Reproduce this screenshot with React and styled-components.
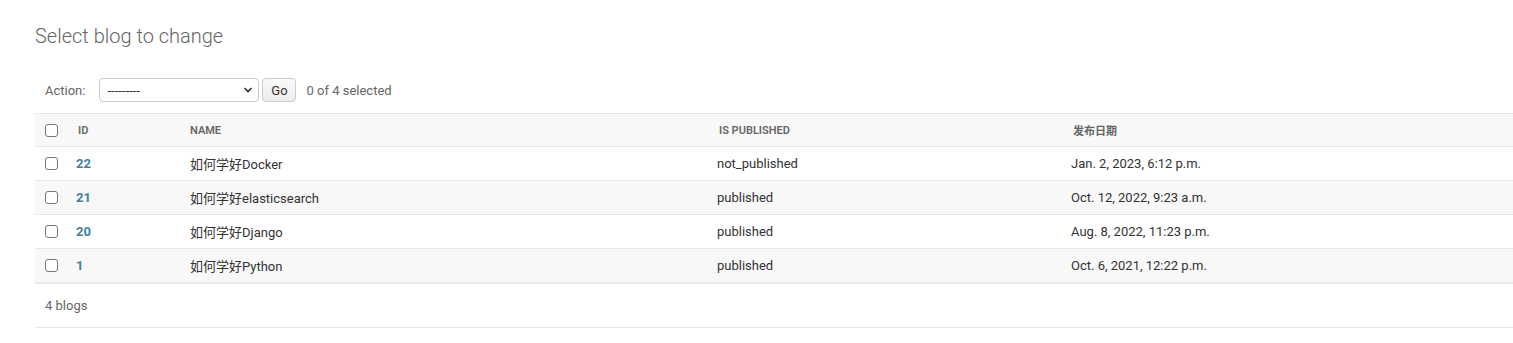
import styled, {createGlobalStyle} from "styled-components";

const GlobalStyle = createGlobalStyle`
    html, body {
        margin: 0;
        padding: 0;
        background: #ffffff;
    }
    body {
        font-family: Roboto, "Noto Sans CJK SC", "Liberation Sans", sans-serif;
        color: #333333;
        font-size: 13px;
    }
`

const Content = styled.div`
    padding: 24px 0 0 35px;
`

const Title = styled.h1`
    margin: 0 0 19px 0;
    font-size: 20px;
    line-height: 24px;
    font-weight: 300;
    color: #666666;
`

const Actions = styled.div`
    display: flex;
    align-items: center;
    height: 46px;
    padding: 0 10px;
    color: #666666;
    font-size: 13px;

    label {
        margin-right: 14px;
    }

    .counter {
        margin-left: 10px;
    }
`

const SelectWrap = styled.div`
    position: relative;
    width: 160px;
    height: 24px;

    select {
        appearance: none;
        -webkit-appearance: none;
        width: 100%;
        height: 100%;
        box-sizing: border-box;
        border: 1px solid #cccccc;
        border-radius: 4px;
        background: #ffffff;
        padding: 0 24px 0 7px;
        font-family: Roboto, "Liberation Sans", sans-serif;
        font-size: 13px;
        color: #333333;
    }

    svg {
        position: absolute;
        right: 6px;
        top: 8px;
        pointer-events: none;
    }
`

const GoButton = styled.button`
    margin-left: 3px;
    width: 34px;
    height: 24px;
    box-sizing: border-box;
    border: 1px solid #cccccc;
    border-radius: 4px;
    background: linear-gradient(#fafafa, #ececec);
    font-family: Roboto, "Liberation Sans", sans-serif;
    font-size: 13px;
    color: #333333;
    padding: 0;
`

const Table = styled.table`
    width: 100%;
    border-collapse: collapse;
    table-layout: fixed;
`

const HeadCell = styled.th`
    width: ${props => props.w || "auto"};
    height: 33px;
    padding: 0 10px;
    box-sizing: border-box;
    text-align: left;
    vertical-align: middle;
    background: #f8f8f8;
    border-top: 1px solid #e8e8e8;
    border-bottom: 1px solid #e8e8e8;
    font-size: 11px;
    font-weight: 600;
    text-transform: uppercase;
    color: #666666;
`

const Row = styled.tr`
    background: ${props => props.alt ? "#f8f8f8" : "#ffffff"};

    a {
        color: #447e9b;
        font-weight: 700;
        text-decoration: none;
    }
`

const Cell = styled.td`
    height: 33px;
    padding: 0 10px 0 ${props => props.pad || "8px"};
    vertical-align: middle;
    border-bottom: ${props => props.last ? "2px" : "1px"} solid #e8e8e8;
    white-space: nowrap;
`

const Check = styled.input`
    appearance: none;
    -webkit-appearance: none;
    display: block;
    margin: 0;
    width: 13px;
    height: 13px;
    box-sizing: border-box;
    border: 1px solid #777777;
    border-radius: 3px;
    background: #ffffff;
`

const Paginator = styled.p`
    margin: 0;
    height: 42px;
    padding: 1px 10px 0;
    line-height: 41px;
    color: #666666;
    font-size: 13px;
    border-bottom: 1px solid #e8e8e8;
`

const blogs = [
    {id: 22, name: "如何学好Docker", published: "not_published", date: "Jan. 2, 2023, 6:12 p.m."},
    {id: 21, name: "如何学好elasticsearch", published: "published", date: "Oct. 12, 2022, 9:23 a.m."},
    {id: 20, name: "如何学好Django", published: "published", date: "Aug. 8, 2022, 11:23 p.m."},
    {id: 1, name: "如何学好Python", published: "published", date: "Oct. 6, 2021, 12:22 p.m."},
];

export default function App() {
    return (
        <>
            <GlobalStyle />
            <Content>
                <Title>Select blog to change</Title>

                <Actions>
                    <label>Action:</label>
                    <SelectWrap>
                        <select defaultValue="">
                            <option value="">---------</option>
                            <option value="delete">Delete selected blogs</option>
                        </select>
                        <svg width="10" height="8" viewBox="0 0 10 8">
                            <path d="M1.5 2 L5 5.5 L8.5 2" fill="none" stroke="#333" strokeWidth="1.6" />
                        </svg>
                    </SelectWrap>
                    <GoButton>Go</GoButton>
                    <span className="counter">0 of 4 selected</span>
                </Actions>

                <Table>
                    <thead>
                        <tr>
                            <HeadCell w="33px"><Check type="checkbox" /></HeadCell>
                            <HeadCell w="112px">ID</HeadCell>
                            <HeadCell w="529px">Name</HeadCell>
                            <HeadCell w="354px">Is published</HeadCell>
                            <HeadCell>发布日期</HeadCell>
                        </tr>
                    </thead>
                    <tbody>
                        {blogs.map((blog, i) => {
                            const last = i === blogs.length - 1;
                            return (
                                <Row key={blog.id} alt={i % 2 === 1}>
                                    <Cell pad="10px" last={last}><Check type="checkbox" /></Cell>
                                    <Cell last={last}><a href="#">{blog.id}</a></Cell>
                                    <Cell pad="10px" last={last}>{blog.name}</Cell>
                                    <Cell last={last}>{blog.published}</Cell>
                                    <Cell last={last}>{blog.date}</Cell>
                                </Row>
                            );
                        })}
                    </tbody>
                </Table>

                <Paginator>4 blogs</Paginator>
            </Content>
        </>
    );
}
